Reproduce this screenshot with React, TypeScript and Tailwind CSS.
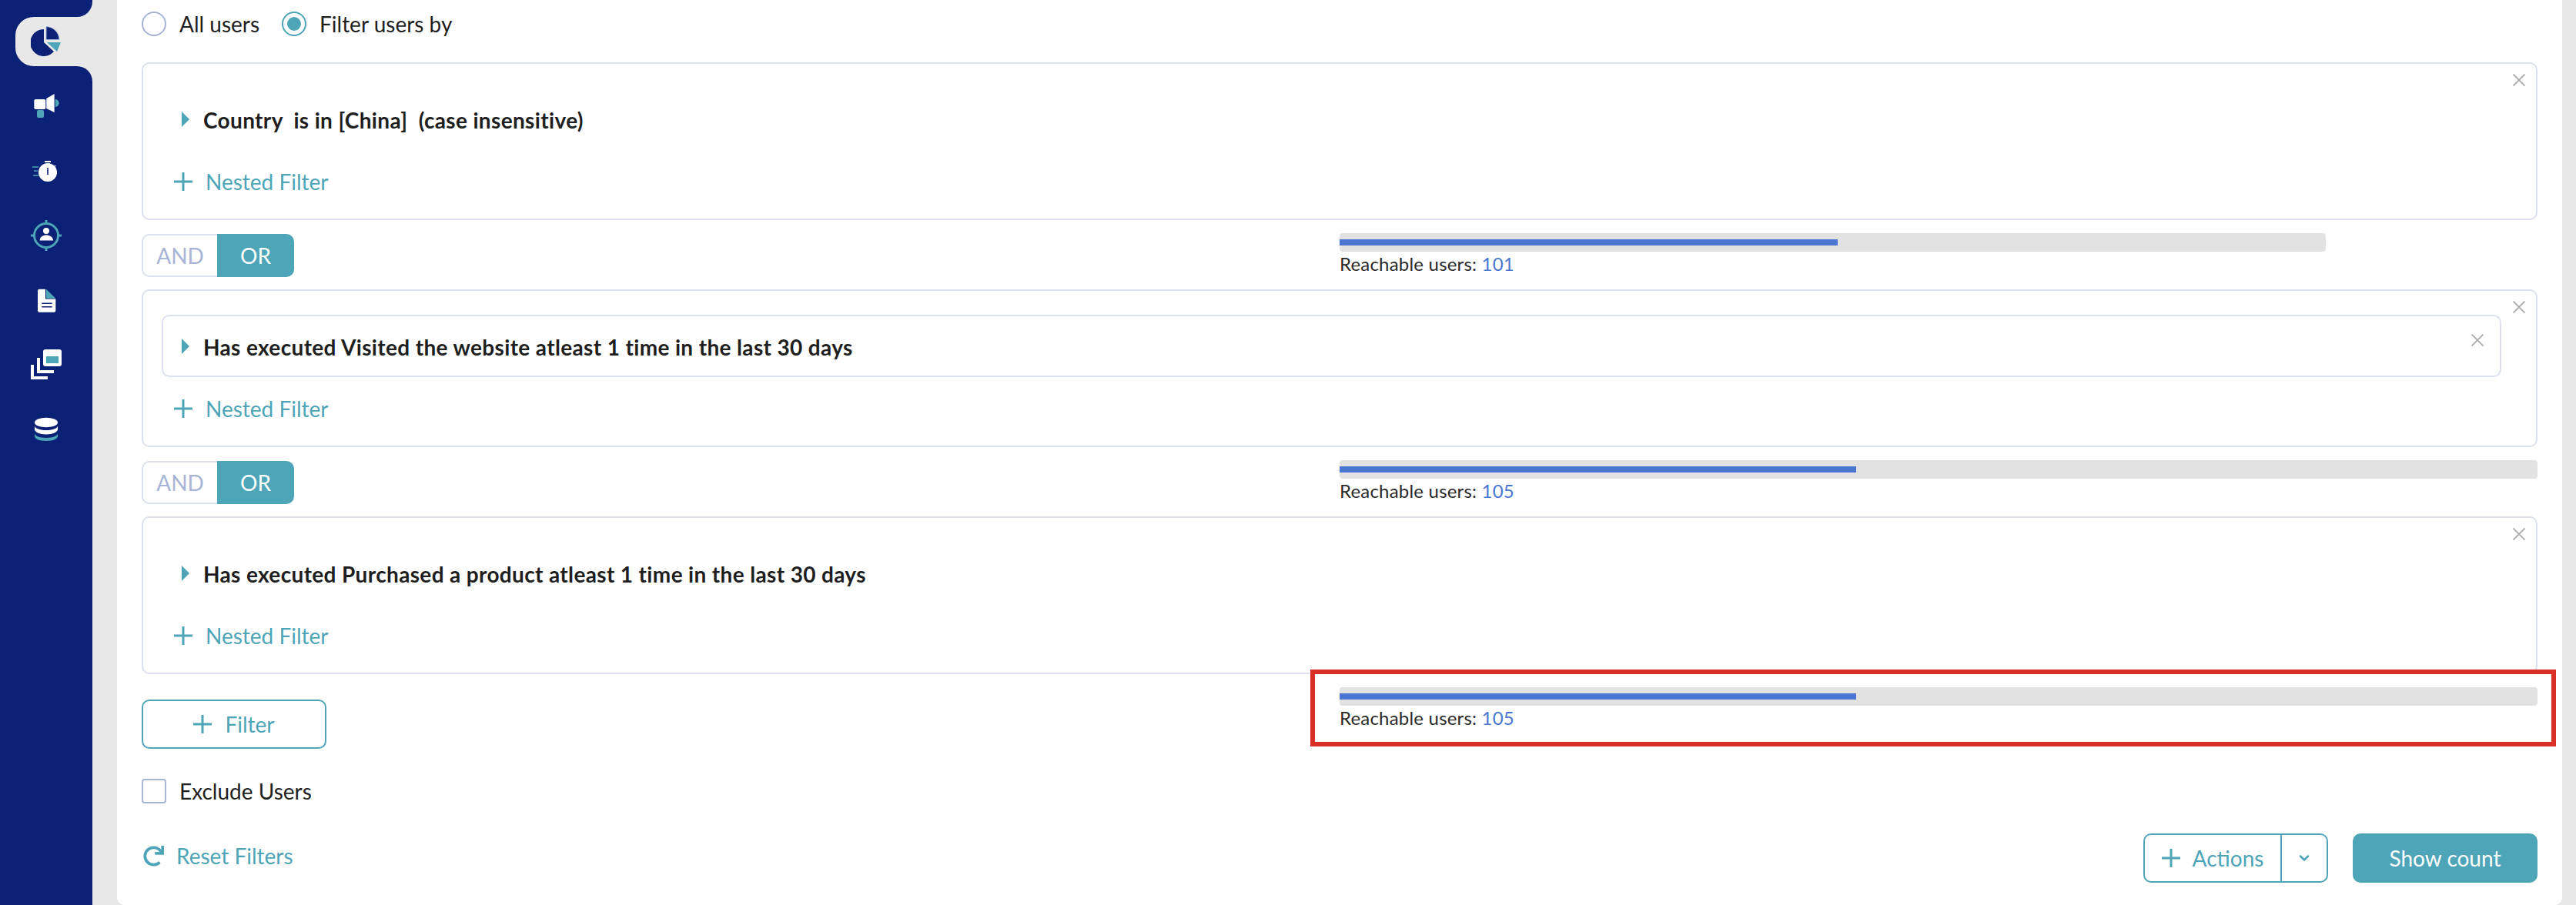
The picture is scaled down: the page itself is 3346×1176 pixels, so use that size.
import { ChevronDown } from "lucide-react"
import { FaRedo } from "react-icons/fa"

const NAVY = "#0a2175"
const TEAL = "#4da5b7"

function PieIcon() {
  return (
    <svg width="40" height="40" viewBox="0 0 40 40">
      <path d="M17 4A17.5 17.5 0 1 0 30 33L17 21Z" fill={NAVY} />
      <path d="M20 0.5A17.5 17.5 0 0 1 37 17.5H20Z" fill={NAVY} stroke="#a8b4d6" strokeWidth="1" />
      <path d="M21 21H39L34 33Z" fill={TEAL} />
    </svg>
  )
}

function MegaphoneIcon() {
  return (
    <svg width="40" height="40" viewBox="0 0 40 40">
      <rect x="4.3" y="11" width="15" height="13" rx="2" fill="#fff" />
      <path d="M20.3 10L30.6 4V28L20.3 23Z" fill="#fff" />
      <path d="M31.7 11a5 5 0 0 1 0 10Z" fill={TEAL} />
      <rect x="8" y="25" width="9" height="10" rx="2" fill={TEAL} />
    </svg>
  )
}

function TimerIcon() {
  return (
    <svg width="40" height="40" viewBox="0 0 40 40">
      <circle cx="22" cy="22" r="12" fill="#fff" />
      <rect x="18" y="7" width="8" height="2" fill="#fff" />
      <path d="M30 15l2-2" stroke="#fff" strokeWidth="1.5" />
      <rect x="21.2" y="16" width="1.6" height="9" fill={NAVY} />
      <path d="M2 15H10M4 20H9M3 26H10" stroke={TEAL} strokeWidth="1.6" />
    </svg>
  )
}

function TargetUserIcon() {
  return (
    <svg width="40" height="40" viewBox="0 0 40 40">
      <circle cx="20" cy="20" r="15.5" fill="none" stroke={TEAL} strokeWidth="3" />
      <path d="M20 0V6M20 34V40M0 20H6M34 20H40" stroke={TEAL} strokeWidth="3" />
      <circle cx="20" cy="14" r="4" fill="#fff" />
      <path d="M11.7 26.5C11.7 21.5 16 19.5 20 19.5S29 21.5 29 26.5Z" fill="#fff" />
    </svg>
  )
}

function DocIcon() {
  return (
    <svg width="40" height="40" viewBox="0 0 40 40">
      <path d="M11 5.7H19V18.5H32.3V33.7A2 2 0 0 1 30.3 35.7H11A2 2 0 0 1 9 33.7V7.7A2 2 0 0 1 11 5.7Z" fill="#fff" />
      <path d="M20 5.7L32.3 17.7H20Z" fill={TEAL} />
      <path d="M14.3 24.3H27.7M14.3 28.7H27.7" stroke={NAVY} strokeWidth="1.6" />
    </svg>
  )
}

function StackIcon() {
  return (
    <svg width="40" height="40" viewBox="0 0 40 40">
      <rect x="16" y="0" width="24" height="22" rx="3" fill="#fff" />
      <rect x="20" y="9" width="16" height="9" fill={TEAL} />
      <path d="M10 11V29H30M2 20V37H22" fill="none" stroke="#fff" strokeWidth="4" />
    </svg>
  )
}

function DatabaseIcon() {
  return (
    <svg width="40" height="40" viewBox="0 0 40 40">
      <ellipse cx="20" cy="11" rx="15" ry="6.2" fill="#fff" />
      <path d="M5 15V20C5 23 11 26.5 20 26.5S35 23 35 20V15C35 18.5 29 21 20 21S5 18.5 5 15Z" fill="#fff" />
      <path d="M5 25V29C5 32 11 35 20 35S35 32 35 29V25C35 28 29 31 20 31S5 28 5 25Z" fill={TEAL} />
    </svg>
  )
}

function PlusIcon() {
  return (
    <svg width="24" height="24" viewBox="0 0 24 24" className="shrink-0">
      <path d="M12 0V24M0 12H24" stroke={TEAL} strokeWidth="3" />
    </svg>
  )
}

function CloseIcon() {
  return (
    <svg width="16" height="16" viewBox="0 0 16 16">
      <path d="M0.5 0.5L15.5 15.5M15.5 0.5L0.5 15.5" stroke="#aaaaaa" strokeWidth="1.8" />
    </svg>
  )
}

function Sidebar() {
  const icons = [<MegaphoneIcon />, <TimerIcon />, <TargetUserIcon />, <DocIcon />, <StackIcon />, <DatabaseIcon />]
  return (
    <div className="w-[120px] h-full shrink-0 flex flex-col">
      <div className="h-[22px] bg-[#0a2175] rounded-br-[20px]"></div>
      <div className="h-[64px] bg-[#0a2175]">
        <div className="ml-5 pr-5 h-full bg-[#e8e8e8] rounded-l-[24px] flex items-center justify-center">
          <PieIcon />
        </div>
      </div>
      <div className="flex-1 bg-[#0a2175] rounded-tr-[20px] pt-[10px]">
        {icons.map((icon, i) => (
          <div key={i} className="h-[84px] flex items-center justify-center">{icon}</div>
        ))}
      </div>
    </div>
  )
}

function Radio({ checked, label }: { checked: boolean; label: string }) {
  return (
    <div className="flex items-center gap-[17px]">
      <div className={`w-8 h-8 rounded-full border-2 flex items-center justify-center ${checked ? "border-[#4da5b7]" : "border-[#a8b4d6]"}`}>
        {checked && <div className="w-[18px] h-[18px] rounded-full bg-[#4da5b7]"></div>}
      </div>
      <span className="text-[28px] leading-8 text-[#1e1e1e]">{label}</span>
    </div>
  )
}

function FilterCard({ text, boxed }: { text: string; boxed: boolean }) {
  return (
    <div className="relative h-[205px] border-2 border-[#dde1ef] rounded-[10px] pl-6 pr-[45px] pt-[31px]">
      <div className="absolute top-[13px] right-[14px]">
        <CloseIcon />
      </div>
      <div className={`relative h-[81px] border-2 rounded-[10px] flex items-center pl-6 gap-[18px] ${boxed ? "border-[#dde1ef]" : "border-transparent"}`}>
        <div className="w-0 h-0 border-y-[10px] border-y-transparent border-l-[10px] border-l-[#4da5b7]"></div>
        <span className="pt-[2px] text-[28px] tracking-[0.35px] font-bold text-[#1e1e1e] whitespace-pre">{text}</span>
        {boxed && (
          <div className="absolute top-[23px] right-[21px]">
            <CloseIcon />
          </div>
        )}
      </div>
      <div className="mt-[26px] ml-4 flex items-center gap-[17px] h-[30px] text-[28px] text-[#4da5b7]">
        <PlusIcon />
        <span>Nested Filter</span>
      </div>
    </div>
  )
}

function Reach({ count, barClass, fillClass }: { count: number; barClass: string; fillClass: string }) {
  return (
    <div className="w-1/2 pt-[17px]">
      <div className={`h-6 bg-[#e2e2e2] rounded-[4px] flex items-center ${barClass}`}>
        <div className={`h-2 bg-[#4a76d1] ${fillClass}`}></div>
      </div>
      <div className="text-[24px] tracking-[0.2px] leading-8 text-[#2a2a2a]">
        Reachable users: <span className="text-[#4a76d1]">{count}</span>
      </div>
    </div>
  )
}

function Connector({ count, barClass, fillClass }: { count: number; barClass: string; fillClass: string }) {
  return (
    <div className="h-[90px] flex">
      <div className="w-1/2 pt-[18px]">
        <div className="w-[198px] h-14 flex text-[28px]">
          <div className="w-[98px] border-2 border-r-0 border-[#dde1ef] rounded-l-[10px] flex items-center justify-center text-[#a8b4d6]">AND</div>
          <div className="w-[100px] bg-[#4da5b7] rounded-r-[10px] flex items-center justify-center text-white">OR</div>
        </div>
      </div>
      <Reach count={count} barClass={barClass} fillClass={fillClass} />
    </div>
  )
}

export default function App() {
  return (
    <div className="relative h-[1176px] w-[3346px] overflow-hidden flex bg-[#e8e8e8] font-['Lato',sans-serif]">
      <Sidebar />
      <div className="ml-8 w-[3176px] h-full bg-white rounded-b-[10px] px-8">
        <div className="h-[62px] flex items-center gap-[29px]">
          <Radio checked={false} label="All users" />
          <Radio checked={true} label="Filter users by" />
        </div>
        <div className="mt-[19px]">
          <FilterCard text="Country  is in [China]  (case insensitive)" boxed={false} />
          <Connector count={101} barClass="w-[1281px]" fillClass="w-[647px]" />
          <FilterCard text="Has executed Visited the website atleast 1 time in the last 30 days" boxed={true} />
          <Connector count={105} barClass="w-full" fillClass="w-[671px]" />
          <FilterCard text="Has executed Purchased a product atleast 1 time in the last 30 days" boxed={false} />
        </div>
        <div className="flex">
          <div className="w-1/2 pt-[33px]">
            <div className="w-[240px] h-16 border-2 border-[#4da5b7] rounded-[10px] flex items-center justify-center gap-[17px] text-[28px] text-[#4da5b7]">
              <PlusIcon />
              <span>Filter</span>
            </div>
          </div>
          <Reach count={105} barClass="w-full" fillClass="w-[671px]" />
        </div>
        <div className="mt-[39px] flex items-center gap-[17px]">
          <div className="w-8 h-8 border-2 border-[#a8b4d6] rounded-[4px]"></div>
          <span className="text-[28px] leading-8 text-[#1e1e1e]">Exclude Users</span>
        </div>
        <div className="mt-[39px] flex items-center justify-between">
          <div className="flex items-center gap-[16px] pl-[2px] pb-[6px] text-[28px] text-[#4da5b7]">
            <FaRedo className="w-[27px] h-[27px]" />
            <span>Reset Filters</span>
          </div>
          <div className="flex gap-8">
            <div className="w-[240px] h-16 border-2 border-[#4da5b7] rounded-[10px] flex text-[28px] text-[#4da5b7]">
              <div className="w-[178px] flex items-center justify-center gap-[16px] border-r-2 border-[#4da5b7]">
                <PlusIcon />
                <span>Actions</span>
              </div>
              <div className="flex-1 flex items-center justify-center">
                <ChevronDown className="w-5 h-5" strokeWidth={3} />
              </div>
            </div>
            <div className="w-[240px] h-16 bg-[#4da5b7] rounded-[10px] flex items-center justify-center text-[28px] text-white">
              Show count
            </div>
          </div>
        </div>
      </div>
      <div className="absolute left-[1702px] top-[870px] w-[1618px] h-[100px] border-[6px] border-[#d93025]"></div>
    </div>
  )
}
